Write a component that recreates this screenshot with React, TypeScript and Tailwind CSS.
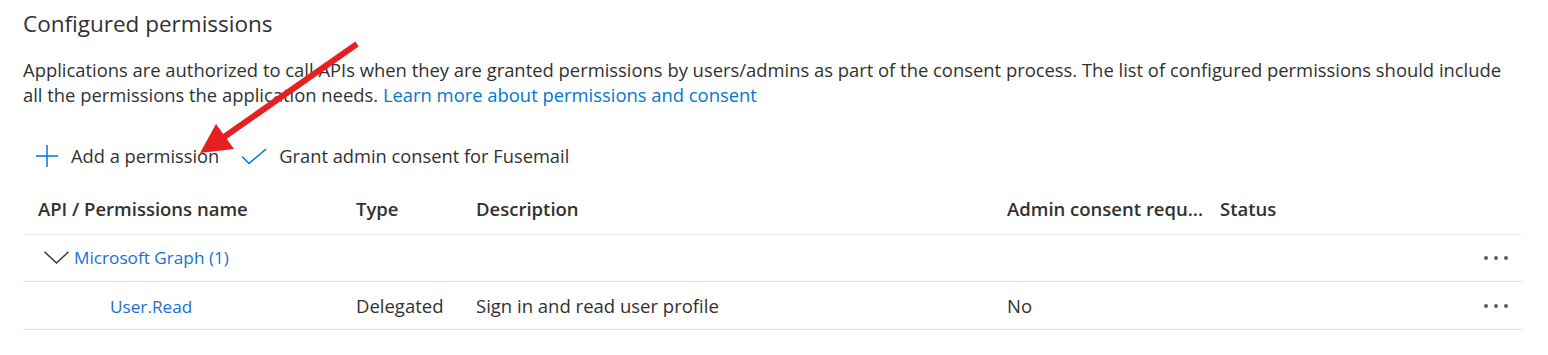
function Dots() {
    return (
        <div className="flex items-center gap-[6px]">
            <span className="h-[4px] w-[4px] rounded-full bg-[#605e5c]" />
            <span className="h-[4px] w-[4px] rounded-full bg-[#605e5c]" />
            <span className="h-[4px] w-[4px] rounded-full bg-[#605e5c]" />
        </div>
    );
}

export default function App() {
    const cols = "grid grid-cols-[333px_120px_531px_213px_1fr_56px]";

    return (
        <div className="relative w-[1548px] h-[355px] bg-white text-[#323130] font-['Open_Sans',sans-serif] overflow-hidden">

            <div className="px-[23px] pt-[8px]">
                {/* Heading */}
                <h2 className="h-[32px] leading-[32px] text-[22.5px]">Configured permissions</h2>

                {/* Intro text */}
                <p className="mt-[17px] w-[1486px] text-[18.4px] leading-[25px]">
                    Applications are authorized to call APIs when they are granted permissions by users/admins as part of the consent process. The list of configured permissions should include all the permissions the application needs.{' '}
                    <a className="text-[#0078d4]">Learn more about permissions and consent</a>
                </p>

                {/* Toolbar */}
                <div className="mt-[27px] h-[44px] flex items-center text-[18.3px]">
                    <button className="flex items-center gap-[13px] pl-[13px] pr-[22px] h-full">
                        <svg width="22" height="22" viewBox="0 0 22 22" className="text-[#0078d4]">
                            <path d="M11 0v22M0 11h22" stroke="currentColor" strokeWidth="1.5" fill="none" />
                        </svg>
                        <span>Add a permission</span>
                    </button>
                    <button className="flex items-center gap-[12px] h-full">
                        <svg width="26" height="17" viewBox="0 0 26 17" className="text-[#0078d4]">
                            <path d="M1 8.5l7 7L25 1" stroke="currentColor" strokeWidth="1.6" fill="none" />
                        </svg>
                        <span>Grant admin consent for Fusemail</span>
                    </button>
                </div>

                {/* Table */}
                <div className="mt-[6px] w-[1499px] text-[18.5px]">
                    <div className={`${cols} h-[51px] items-center font-semibold border-b border-[#edebe9]`}>
                        <div className="pl-[15px]">API / Permissions name</div>
                        <div>Type</div>
                        <div>Description</div>
                        <div className="truncate pr-[10px]">Admin consent requ...</div>
                        <div>Status</div>
                        <div />
                    </div>

                    <div className={`${cols} h-[47px] items-center border-b border-[#e1dfdd]`}>
                        <div className="flex items-center gap-[5px] pl-[21px]">
                            <svg width="25" height="13" viewBox="0 0 25 13" className="text-[#323130]">
                                <path d="M0.5 0.8L12.5 12L24.5 0.8" stroke="currentColor" strokeWidth="1.4" fill="none" />
                            </svg>
                            <a className="text-[17.2px] text-[#1a6fd4]">Microsoft Graph (1)</a>
                        </div>
                        <div />
                        <div />
                        <div />
                        <div />
                        <div className="flex justify-end pr-[14px]"><Dots /></div>
                    </div>

                    <div className={`${cols} h-[48px] items-center border-b border-[#e1dfdd]`}>
                        <div className="pl-[87px]">
                            <a className="text-[17.2px] text-[#1a6fd4]">User.Read</a>
                        </div>
                        <div>Delegated</div>
                        <div>Sign in and read user profile</div>
                        <div>No</div>
                        <div />
                        <div className="flex justify-end pr-[14px]"><Dots /></div>
                    </div>
                </div>
            </div>

            {/* Annotation arrow */}
            <svg className="absolute left-0 top-0 pointer-events-none" width="400" height="180">
                <line x1="357" y1="44" x2="224" y2="137" stroke="#e62020" strokeWidth="6" strokeLinecap="butt" />
                <polygon points="200,153 216,124 234,149" fill="#e62020" />
            </svg>
        </div>
    );
}
